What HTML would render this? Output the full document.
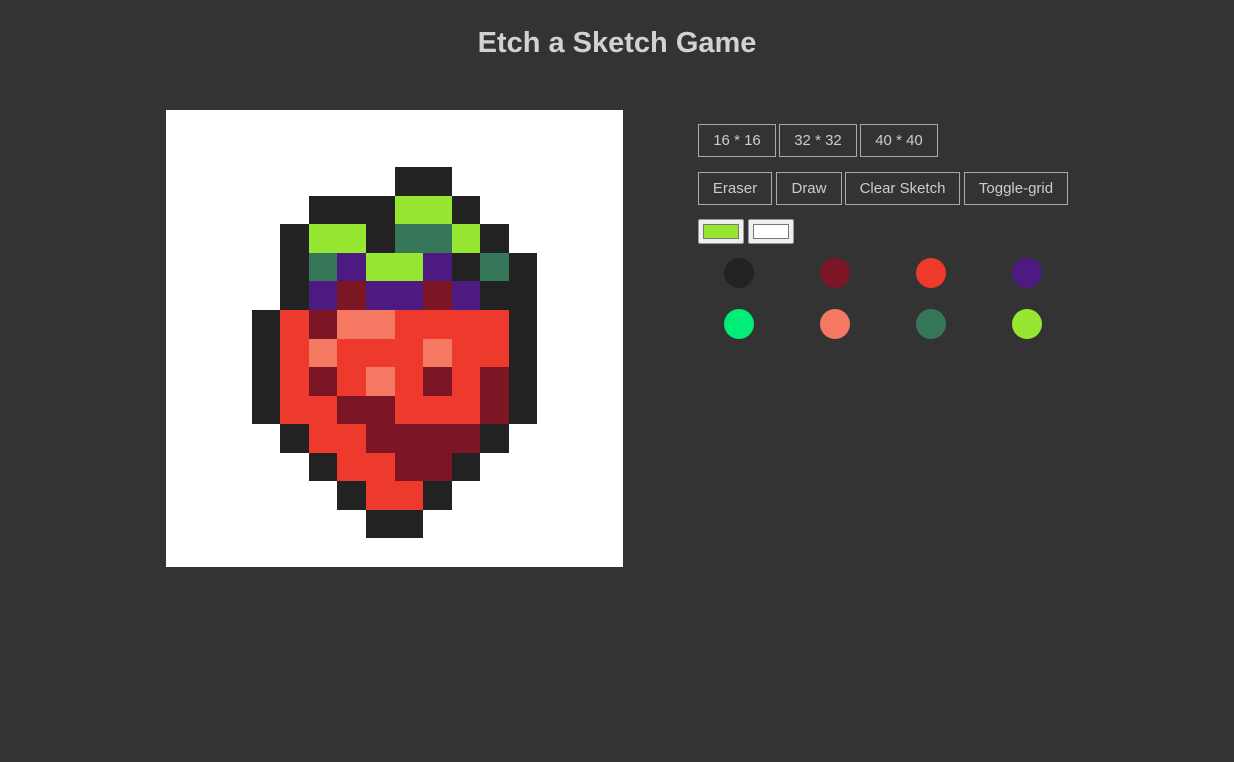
<!DOCTYPE html>
<html><head><meta charset="utf-8"><style>
body{margin:0;background:#333;width:1234px;height:762px;position:relative;font-family:"Liberation Sans",sans-serif;overflow:hidden}
h1{position:absolute;top:27px;left:0;width:1234px;text-align:center;margin:0;font-size:29px;color:#d2d2d2;font-weight:bold}
#pad{position:absolute;left:166px;top:110px;width:457px;height:457px;background:#fff;display:grid;grid-template-columns:repeat(16,1fr);grid-template-rows:repeat(16,1fr)}
.b{position:absolute;box-sizing:border-box;border:1px solid #aaa;color:#ccc;font-size:15px;display:flex;align-items:center;justify-content:center;background:#333}
.c{position:absolute;box-sizing:border-box;background:#efefef;border:1px solid #999;border-radius:2px;padding:4px}
.c div{width:100%;height:100%;box-sizing:border-box;border:1px solid #777}
.d{position:absolute;width:30px;height:30px;border-radius:50%}
</style></head><body>
<h1>Etch a Sketch Game</h1>
<div id="pad"></div>
<div class="b" style="left:698px;top:124px;width:78px;height:33px">16 * 16</div>
<div class="b" style="left:779px;top:124px;width:78px;height:33px">32 * 32</div>
<div class="b" style="left:860px;top:124px;width:78px;height:33px">40 * 40</div>
<div class="b" style="left:698px;top:172px;width:74px;height:33px">Eraser</div>
<div class="b" style="left:776px;top:172px;width:66px;height:33px">Draw</div>
<div class="b" style="left:845px;top:172px;width:115px;height:33px">Clear Sketch</div>
<div class="b" style="left:964px;top:172px;width:104px;height:33px">Toggle-grid</div>
<div class="c" style="left:698px;top:219px;width:46px;height:25px"><div style="background:#97e631"></div></div>
<div class="c" style="left:748px;top:219px;width:46px;height:25px"><div style="background:#fff"></div></div>
<div class="d" style="left:724px;top:258px;background:#222"></div>
<div class="d" style="left:820px;top:258px;background:#7d1624"></div>
<div class="d" style="left:916px;top:258px;background:#ee3a2c"></div>
<div class="d" style="left:1012px;top:258px;background:#4c1a80"></div>
<div class="d" style="left:724px;top:309px;background:#00ee77"></div>
<div class="d" style="left:820px;top:309px;background:#f47862"></div>
<div class="d" style="left:916px;top:309px;background:#36775a"></div>
<div class="d" style="left:1012px;top:309px;background:#97e631"></div>
<script>
var rows=[
"................",
"................",
"........kk......",
".....kkkggk.....",
"....kggkttgk....",
"....ktpggpkdk...",
"....kpdppdpkk...".replace(/d(?=k)/,'t'),
"...krdssrrrrk...",
"...krsrrrsrrk...",
"...krdrsrdrdk...",
"...krrddrrrdk...",
"....krrddddk....",
".....krrddk.....",
"......krrk......",
".......kk.......",
"................"];
rows[5]="....ktpggpktk...";
rows[6]="....kpdppdpkk...";
var col={'.':'#fff',k:'#222',g:'#97e631',t:'#36775a',p:'#4c1a80',d:'#7d1624',r:'#ee3a2c',s:'#f47862'};
var pad=document.getElementById('pad'),h='';
rows.forEach(function(r){for(var i=0;i<16;i++)h+='<div style="background:'+col[r[i]]+'"></div>';});
pad.innerHTML=h;
</script>
</body></html>
